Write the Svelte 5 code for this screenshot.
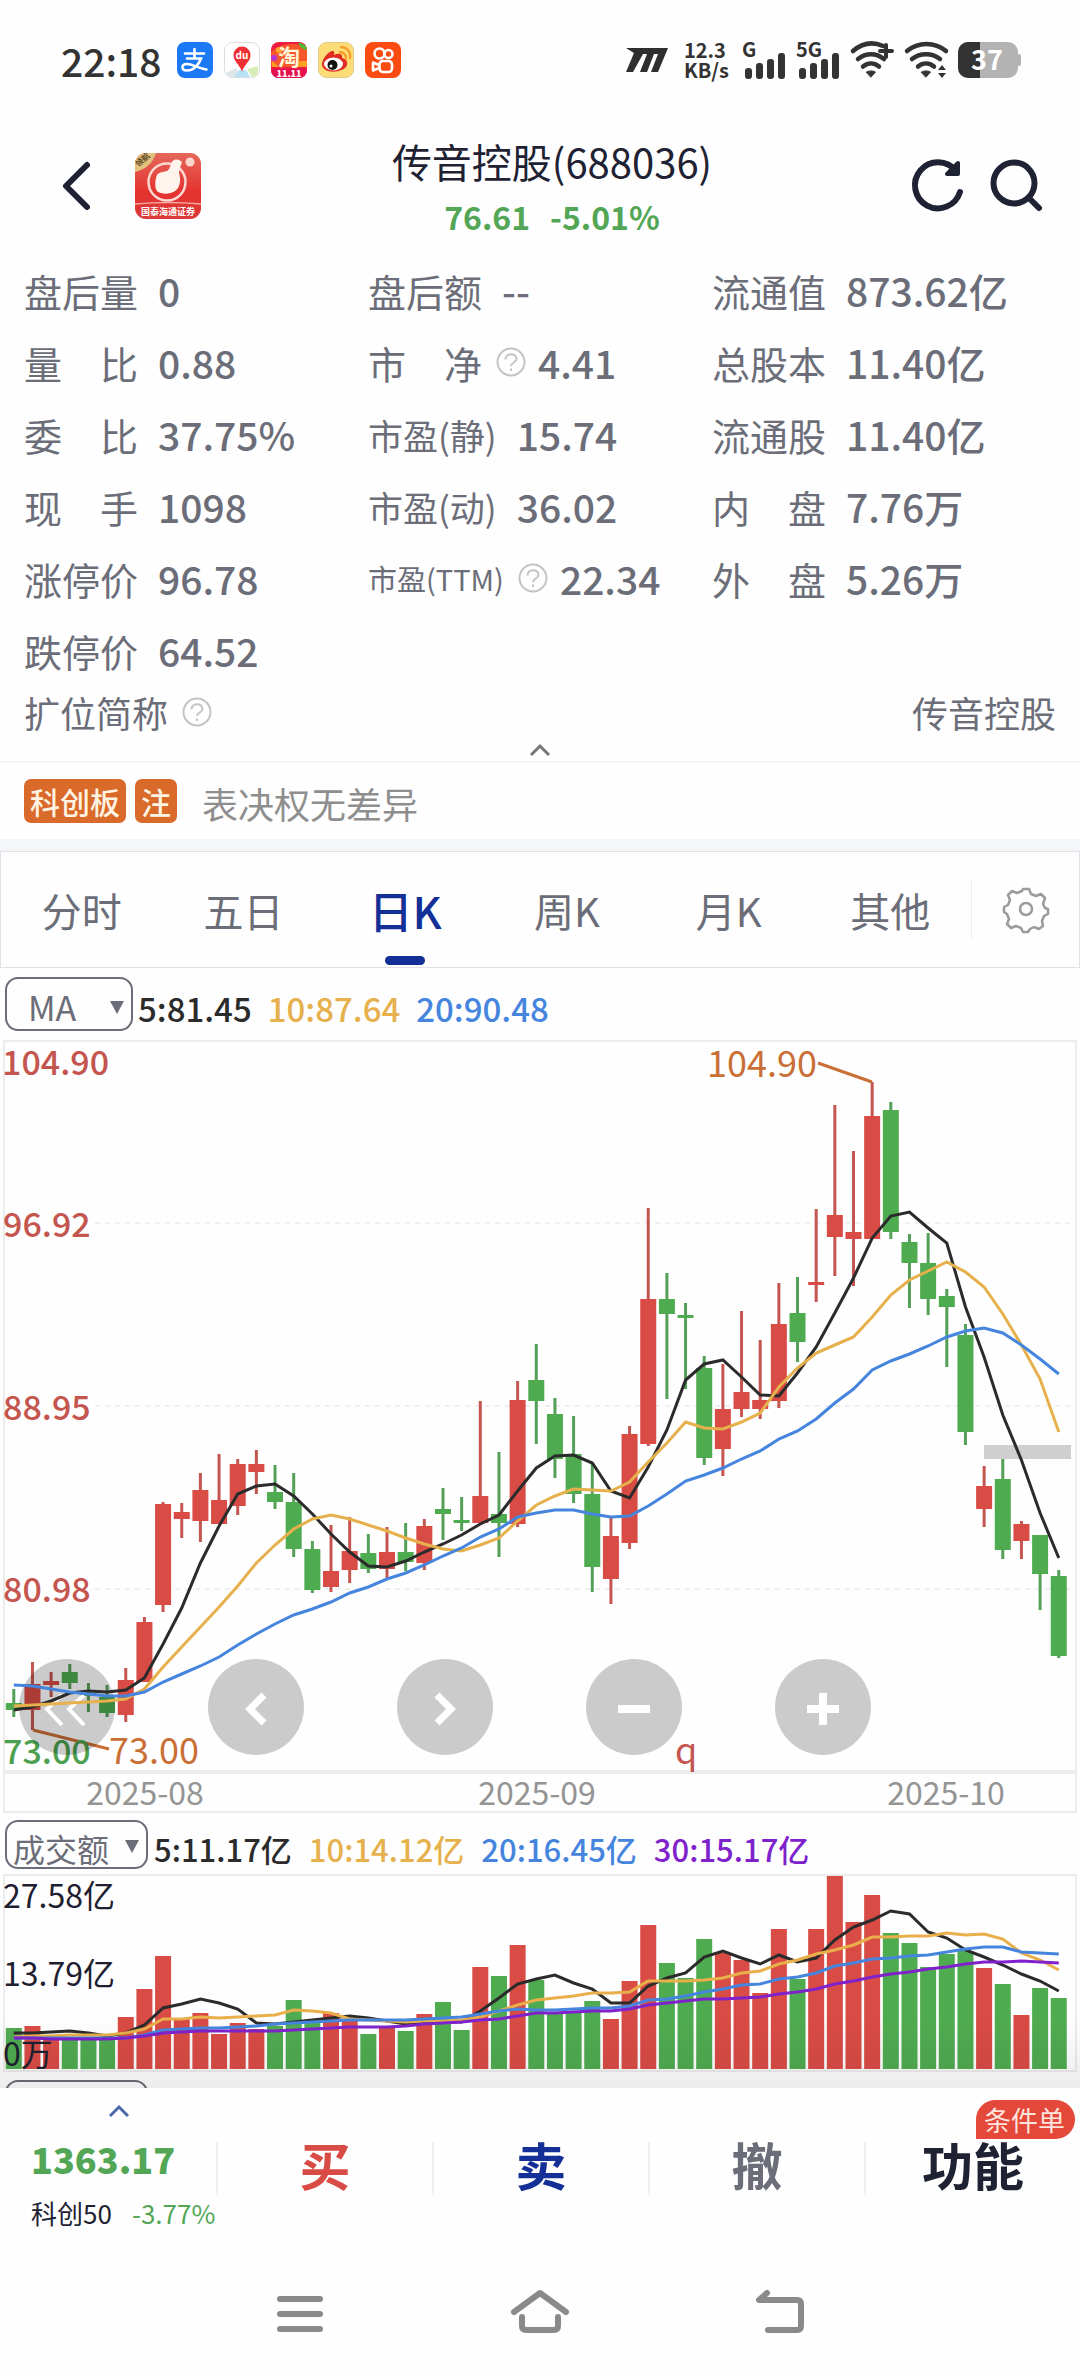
<script lang="ts">
  type Candle = [string, number, number, number, number];

  const statColumns = [
    [
      { label: '盘后量', value: '0' },
      { label: '量　比', value: '0.88' },
      { label: '委　比', value: '37.75%' },
      { label: '现　手', value: '1098' },
      { label: '涨停价', value: '96.78' },
      { label: '跌停价', value: '64.52' },
    ],
    [
      { label: '盘后额', value: '--' },
      { label: '市　净', value: '4.41', help: true },
      { label: '市盈(静)', value: '15.74', size: 'medium' },
      { label: '市盈(动)', value: '36.02', size: 'medium' },
      { label: '市盈(TTM)', value: '22.34', size: 'small', help: true },
    ],
    [
      { label: '流通值', value: '873.62亿' },
      { label: '总股本', value: '11.40亿' },
      { label: '流通股', value: '11.40亿' },
      { label: '内　盘', value: '7.76万' },
      { label: '外　盘', value: '5.26万' },
    ],
  ];

  const tabs = ['分时', '五日', '日K', '周K', '月K', '其他'];
  let activeTab = $state('日K');

  let mainIndex = $state('MA');
  let subIndex = $state('成交额');
  let thirdIndex = $state('MACD');

  const RED = '#d94b45';
  const GREEN = '#4fab50';

  // direction, high, body top, body bottom, low (chart units)
  const candles: Candle[] = [
    ['g', 649, 663, 670, 677], ['r', 622, 644, 670, 690], ['r', 632, 641, 645, 657], ['g', 624, 632, 643, 649],
    ['g', 643, 653, 656, 672], ['g', 645, 657, 673, 677], ['r', 628, 640, 675, 682], ['r', 577, 582, 642, 642],
    ['r', 462, 464, 565, 572], ['r', 463, 472, 479, 498], ['r', 433, 450, 481, 502], ['r', 414, 460, 484, 484],
    ['r', 419, 424, 466, 475], ['r', 410, 424, 432, 454], ['g', 425, 452, 462, 469], ['g', 433, 462, 509, 517],
    ['g', 501, 509, 550, 553], ['r', 485, 531, 547, 552], ['r', 477, 511, 530, 543], ['g', 494, 513, 529, 533],
    ['r', 487, 512, 529, 538], ['g', 483, 512, 522, 531], ['r', 479, 486, 523, 530], ['g', 448, 469, 474, 500],
    ['g', 457, 480, 483, 491], ['r', 361, 456, 483, 483], ['g', 412, 474, 483, 517], ['r', 341, 360, 484, 487],
    ['g', 304, 340, 361, 404], ['g', 358, 374, 419, 438], ['g', 376, 414, 454, 463], ['g', 423, 454, 527, 552],
    ['r', 478, 496, 539, 564], ['r', 386, 394, 503, 509], ['r', 168, 259, 404, 406], ['g', 233, 259, 274, 359],
    ['g', 263, 275, 278, 349], ['g', 316, 328, 418, 425], ['r', 324, 369, 409, 436], ['r', 271, 352, 369, 377],
    ['r', 300, 360, 369, 379], ['r', 243, 284, 361, 368], ['g', 237, 273, 302, 322], ['r', 169, 242, 245, 262],
    ['r', 65, 175, 197, 236], ['r', 111, 192, 199, 246], ['r', 42, 76, 199, 199], ['g', 62, 70, 192, 199],
    ['g', 194, 202, 223, 268], ['g', 193, 223, 259, 275], ['g', 249, 256, 267, 327], ['g', 284, 295, 392, 405],
    ['r', 426, 446, 469, 487], ['g', 419, 439, 510, 519], ['r', 481, 484, 501, 519], ['g', 495, 495, 534, 570],
    ['g', 530, 536, 616, 618],
  ];

  const priceLines = [
    { color: '#2b2b2b', data: [670,667,661,653,651,652,650,638,604,568,523,486,454,446,444,456,474,494,512,526,527,521,512,504,495,484,475,451,428,416,415,423,451,458,427,390,340,324,320,337,355,356,333,307,273,238,198,176,172,188,203,267,317,375,420,473,518] },
    { color: '#e6b04c', data: [666,665,664,663,662,661,659,649,627,607,587,567,546,523,505,489,479,475,479,485,491,498,504,509,511,505,498,481,465,456,449,450,451,442,422,403,382,388,389,382,373,347,328,313,305,297,277,255,240,231,222,232,247,274,305,339,392] },
    { color: '#4585de', data: [645,646,649,652,654,656,656,652,642,634,626,617,605,594,584,575,569,562,553,547,539,533,525,516,508,497,489,477,473,470,470,474,477,476,466,454,441,435,428,419,411,399,391,379,363,349,330,321,314,306,297,291,288,293,305,319,334] },
  ];

  const volumes = [154,152,165,166,166,166,143,115,82,145,139,160,149,155,152,126,147,139,147,160,152,157,140,128,156,93,102,71,106,138,138,127,145,107,51,89,104,65,79,86,119,55,105,55,2,48,21,59,69,93,80,77,94,110,141,114,124];

  const volumeLines = [
    { color: '#2b2b2b', data: [159,159,158,157,159,162,159,151,134,130,125,129,135,149,150,148,146,144,142,144,147,150,148,148,148,137,124,110,105,101,109,115,129,129,112,104,99,83,77,84,90,81,88,84,66,53,46,37,40,58,64,76,83,91,100,107,117] },
    { color: '#e9af4b', data: [163,162,162,161,161,161,159,155,145,145,143,144,143,142,141,136,137,139,145,146,147,148,147,147,146,143,137,131,126,124,122,119,119,118,107,107,107,106,104,99,97,90,86,80,76,71,63,63,62,62,59,61,60,65,79,86,96] },
    { color: '#4585de', data: [164,164,164,164,164,164,164,161,156,155,154,154,153,152,150,149,148,147,146,146,146,146,145,144,143,140,137,135,136,136,135,134,134,132,126,125,122,118,115,111,110,105,103,99,92,89,85,84,82,81,78,75,73,73,78,79,80] },
    { color: '#7f22cc', data: [164,164,165,165,165,165,164,162,159,158,157,157,157,157,157,156,155,154,153,153,153,152,150,149,148,146,145,142,139,139,138,137,137,135,131,129,127,125,125,124,123,120,118,115,110,107,103,100,98,95,93,90,88,88,87,88,89] },
  ];

  const xAt = (i: number) => 13.8 + i * 18.66;
  const colorOf = (dir: string) => (dir === 'r' ? RED : GREEN);

  function toPoints(data: number[]) {
    return data.map((y, i) => `${xAt(i).toFixed(1)},${y}`).join(' ');
  }

  const controls = [
    { name: '最左', left: 67 },
    { name: '左移', left: 256 },
    { name: '右移', left: 445 },
    { name: '缩小', left: 634 },
    { name: '放大', left: 823 },
  ];
</script>

{#snippet help()}
  <button class="help" aria-label="说明">
    <svg viewBox="0 0 30 30" width="30" height="30" fill="none" stroke="#c4c4c8" stroke-width="2">
      <circle cx="15" cy="15" r="13.5" />
      <path d="M9.500 12.500c0-7 11-7 11-.5 0 3.500-5.500 3.500-5.500 7" />
      <path d="M15 21.500v2.500" />
    </svg>
  </button>
{/snippet}

{#snippet signal(label: string)}
  <svg class="signal" viewBox="0 0 44 38" width="44" height="38" fill="#333">
    <text x="0" y="16" font-size="20" font-weight="700">{label}</text>
    <rect x="3" y="27" width="7" height="11" rx="3" />
    <rect x="14" y="22" width="7" height="16" rx="3" />
    <rect x="25" y="18" width="7" height="20" rx="3" />
    <rect x="36" y="12" width="7" height="26" rx="3" />
  </svg>
{/snippet}

<div class="page">
  <div class="status">
    <span class="time">22:18</span>
    <div class="apps">
      <svg viewBox="0 0 36 36" width="36" height="36">
        <rect width="36" height="36" rx="8" fill="#1b79f5" />
        <g fill="none" stroke="#fff" stroke-width="2.600" stroke-linecap="round">
          <path d="M8 11.500h19M17.500 7v9M10 16.500h14C22 22 17 28.500 10 28.500c-6 0-6-6.500-.5-6.500 6 0 11 4 20 5.500" />
        </g>
      </svg>
      <svg viewBox="0 0 36 36" width="36" height="36">
        <rect x=".5" y=".5" width="35" height="35" rx="8" fill="#fff" stroke="#ddd" />
        <path d="M2 31l10-5 5 9H9c-4 0-6-1-7-4z" fill="#dfe6ea" />
        <path d="M10 35l5-7h7l4 7z" fill="#b8e2f5" />
        <path d="M23 27l11-3v5c0 3-2 6-6 6z" fill="#d6efb8" />
        <path d="M18 30C16.500 23 9.500 20 9.500 13a8.500 8.500 0 0 1 17 0c0 7-7 10-8.500 17z" fill="#ee2f33" />
        <text x="18" y="17" font-size="10" font-weight="700" fill="#fff" text-anchor="middle">du</text>
      </svg>
      <svg viewBox="0 0 36 36" width="36" height="36">
        <rect width="36" height="36" rx="8" fill="#ee1c3e" />
        <path d="M0 10c8-8 27-12 36-2v17H0z" fill="#f4572c" />
        <path d="M27 1c5 0 8 2 9 7-3 0-6-2-9-7z" fill="#4bbd32" />
        <circle cx="8" cy="8" r="3" fill="#ffa62b" />
        <circle cx="3" cy="16" r="3" fill="#b535d8" />
        <path d="M1 19l7 6H1zM28 19h8v6h-9z" fill="#ff9e22" />
        <path d="M0 27h36v1a8 8 0 0 1-8 8H8a8 8 0 0 1-8-8z" fill="#e6114f" />
        <text x="18" y="23" font-size="22" font-weight="700" fill="#fff5d8" text-anchor="middle">淘</text>
        <text x="18" y="35" font-size="9" font-weight="900" fill="#fff" text-anchor="middle">11.11</text>
      </svg>
      <svg viewBox="0 0 36 36" width="36" height="36">
        <rect x=".5" y=".5" width="35" height="35" rx="8" fill="#fcdc76" stroke="#e3c987" />
        <path d="M4 22c0-6 8-14 11-13 2 .6 1 3 1 4 4-2 9-2 8 3 4 1 6 4 5 7-2 8-25 10-25-1z" fill="#e02a22" />
        <ellipse cx="15.500" cy="22" rx="9.500" ry="6.500" fill="#fff" />
        <circle cx="14.500" cy="23" r="5" fill="#111" />
        <circle cx="13" cy="24" r="1.500" fill="#fff" />
        <path d="M22 10a6 6 0 0 1 6 7M23 5c6 0 10 5 9 11" fill="none" stroke="#f6a02c" stroke-width="2.400" stroke-linecap="round" />
      </svg>
      <svg viewBox="0 0 36 36" width="36" height="36">
        <rect width="36" height="36" rx="8" fill="#fa4b10" />
        <g fill="none" stroke="#fff" stroke-width="2.600">
          <circle cx="14.500" cy="11.500" r="5" />
          <circle cx="23.500" cy="12" r="4" />
          <rect x="14.500" y="19" width="12.500" height="11" rx="3.500" />
          <path d="M14 23l-6-2.500v8L14 26" stroke-linejoin="round" />
        </g>
      </svg>
    </div>
    <div class="system">
      <svg viewBox="0 0 42 24" width="42" height="24" fill="#2f2f2f">
        <path d="M0 0h42l-10 24h-7l7-18h-4l-7 18h-7l7-18h-4L7 24H0L8 5z" />
      </svg>
      <div class="speed"><span>12.3</span><span>KB/s</span></div>
      {@render signal('G')}
      {@render signal('5G')}
      <svg viewBox="0 0 44 38" width="44" height="38" fill="none" stroke="#333" stroke-width="4.500" stroke-linecap="round">
        <path d="M3 10c10-8.500 20-9.500 30-5M8 18c8-6.500 18-6.500 26 0M13 25.500c5-4 11-4 16 0" />
        <path d="M16.500 31c3-1.500 6-1.500 9 0L21 36z" fill="#333" stroke-width="1" />
        <path d="M30 10h12M36 4v12" stroke-width="4" />
      </svg>
      <svg viewBox="0 0 44 38" width="44" height="38" fill="none" stroke="#333" stroke-width="4.500" stroke-linecap="round">
        <path d="M3 10c11-9.500 28-9.500 39 0M8 18c8-6.500 20-6.500 28 0M14 25.500c5-4 11-4 16 0" />
        <path d="M17.500 31c3-1.500 6-1.500 9 0L22 36z" fill="#333" stroke-width="1" />
        <path d="M34 29l4-5 4 5zM34 32l4 5 4-5z" fill="#333" stroke="none" />
      </svg>
      <svg viewBox="0 0 64 36" width="64" height="36">
        <rect width="60" height="36" rx="10" fill="#b3b3b3" />
        <rect x="59" y="12" width="4" height="12" rx="2" fill="#b3b3b3" />
        <path d="M10 0h12v36H10A10 10 0 0 1 0 26V10A10 10 0 0 1 10 0z" fill="#333" />
        <text x="29" y="28" font-size="27" font-weight="700" fill="#fff" text-anchor="middle">37</text>
      </svg>
    </div>
  </div>

  <header>
    <div class="side">
      <button aria-label="返回">
        <svg viewBox="0 0 32 52" width="32" height="52" fill="none" stroke="#1e2233" stroke-width="6" stroke-linecap="round" stroke-linejoin="round">
          <path d="M27 5L6 26l21 21" />
        </svg>
      </button>
      <svg class="logo" viewBox="0 0 66 66" width="66" height="66">
        <defs>
          <linearGradient id="logo-bg" x1="0" y1="0" x2="0" y2="1">
            <stop offset="0" stop-color="#e4685a" />
            <stop offset=".6" stop-color="#e5322f" />
            <stop offset="1" stop-color="#d93a3a" />
          </linearGradient>
        </defs>
        <rect width="66" height="66" rx="11" fill="url(#logo-bg)" />
        <path d="M11 0h10C18 10 10 17 0 19v-8A11 11 0 0 1 11 0z" fill="#e3c07c" />
        <text x="-7" y="13" font-size="8" font-weight="700" fill="#5d4a28" transform="rotate(-42)">领航</text>
        <circle cx="32" cy="29" r="18.500" fill="none" stroke="#fbd9d2" stroke-width="2.500" />
        <path d="M22 22c2-3 6-3 10-4 4-2 3-9 7-11 3-1 6 0 8 2-1 4-3 7-3 11 2 6 1 12-1 15-4 6-13 7-20 4-4-3-3-12-1-17z" fill="#fff3ee" />
        <circle cx="55" cy="9" r="4.500" fill="#f9d5cd" />
        <path d="M0 51c22-2 44-2 66 0" stroke="#f4aaa0" stroke-width="1.500" fill="none" />
        <text x="33" y="62" font-size="9" font-weight="700" fill="#fff" text-anchor="middle">国泰海通证券</text>
      </svg>
    </div>
    <div class="title">
      <h1>传音控股(688036)</h1>
      <p><span>76.61</span><span>-5.01%</span></p>
    </div>
    <div class="side right">
      <button aria-label="刷新">
        <svg viewBox="0 0 56 56" width="56" height="56" fill="none" stroke="#1e2233" stroke-width="6" stroke-linecap="round">
          <path d="M50 34A23 23 0 1 1 46 13" />
          <path d="M48 5v11H37z" fill="#1e2233" stroke-width="4" stroke-linejoin="round" />
        </svg>
      </button>
      <button aria-label="搜索">
        <svg viewBox="0 0 56 56" width="56" height="56" fill="none" stroke="#1e2233" stroke-width="6" stroke-linecap="round">
          <circle cx="26" cy="25" r="20.500" />
          <path d="M41 40l10 10" />
        </svg>
      </button>
    </div>
  </header>

  <section class="stats">
    <div class="columns">
      {#each statColumns as column}
        <div class="column">
          {#each column as stat}
            <div class="stat">
              <span class="label {stat.size ?? ''}">{stat.label}</span>
              {#if stat.help}
                {@render help()}
              {/if}
              <span class="value">{stat.value}</span>
            </div>
          {/each}
        </div>
      {/each}
    </div>
    <div class="fullname">
      <span>扩位简称</span>
      {@render help()}
      <span class="name">传音控股</span>
    </div>
    <button class="collapse" aria-label="收起">
      <svg viewBox="0 0 22 12" width="22" height="12" fill="none" stroke="#777" stroke-width="3"><path d="M2 11l9-9 9 9" /></svg>
    </button>
  </section>

  <div class="notice">
    <span class="tag">科创板</span>
    <span class="tag">注</span>
    <span class="note">表决权无差异</span>
  </div>

  <nav class="tabs">
    {#each tabs as tab}
      <button class:active={tab === activeTab} onclick={() => (activeTab = tab)}>{tab}</button>
    {/each}
    <button class="gear" aria-label="设置">
      <svg viewBox="0 0 46 46" width="46" height="46" fill="none" stroke="#9b9b9f" stroke-width="2.500" stroke-linejoin="round">
        <path d="M20 3h6l2 5 5 2 5-2 4 4-2 6 2 4 3 1v5l-4 2-2 5 1 5-4 3-5-2-4 2-2 3h-5l-2-4-5-2-5 2-4-4 2-5-2-5-3-2v-5l4-2 2-5-2-5 4-4 5 2 5-2z" />
        <circle cx="23" cy="23" r="6" />
      </svg>
    </button>
  </nav>

  <div class="scroll">
    <div class="legend main">
      <div class="picker">
        <select bind:value={mainIndex} aria-label="主图指标">
          <option>MA</option>
          <option>BOLL</option>
        </select>
      </div>
      <span class="c5">5:81.45</span>
      <span class="c10">10:87.64</span>
      <span class="c20">20:90.48</span>
    </div>

    <div class="chart">
      <svg viewBox="0 0 1080 774">
        <rect x="4" y="1" width="1072" height="730" fill="none" stroke="#ececec" stroke-width="2" />
        <rect x="4" y="733" width="1072" height="39" fill="none" stroke="#ececec" stroke-width="2" />
        {#each [183, 366, 549] as y}
          <line x1="95" x2="1072" y1={y} y2={y} stroke="#efefef" stroke-width="2" stroke-dasharray="5 5" />
        {/each}
        {#each candles as [dir, high, top, bottom, low], i}
          <rect x={xAt(i) - 1.5} y={high} width="3" height={low - high} fill={dir === 'r' ? '#c4564f' : '#55a058'} />
          <rect x={xAt(i) - 8} y={top} width="16" height={bottom - top} fill={colorOf(dir)} />
        {/each}
        <rect x="984" y="405" width="87" height="14" fill="#cfcfcf" />
        <g fill="none" stroke="#c96f35" stroke-width="3">
          <path d="M818 23l54 19" />
          <path d="M33 690l76 19" />
        </g>
        <g font-size="34" font-weight="500" fill="#c4554f">
          <text x="2" y="35">104.90</text>
          <text x="3" y="197">96.92</text>
          <text x="3" y="380">88.95</text>
          <text x="3" y="562">80.98</text>
          <text x="3" y="724" fill="#4ca04f">73.00</text>
        </g>
        <g font-size="36" fill="#c96f35">
          <text x="707" y="37">104.90</text>
          <text x="109" y="724">73.00</text>
          <text x="675" y="724" fill="#c4554f">q</text>
        </g>
        <g font-size="32" fill="#949494" text-anchor="middle">
          <text x="145" y="765">2025-08</text>
          <text x="537" y="765">2025-09</text>
          <text x="946" y="765">2025-10</text>
        </g>
      </svg>
      {#each controls as control, i}
        <button class="control" aria-label={control.name} style="left: {(control.left / 1080) * 100}%">
          <svg viewBox="0 0 96 96" width="96" height="96" fill="none" stroke="#fff" stroke-width="8">
            {#if i === 0}
              <path d="M43 36L28 50l15 16M65 36L50 50l15 16" stroke-width="4" />
            {:else if i === 1}
              <path d="M56 36L42 50l14 14" stroke-width="7" />
            {:else if i === 2}
              <path d="M40 36l14 14-14 14" stroke-width="7" />
            {:else if i === 3}
              <path d="M32 50h32" />
            {:else}
              <path d="M32 50h32M48 34v32" />
            {/if}
          </svg>
        </button>
      {/each}
      <svg class="lines" viewBox="0 0 1080 774" fill="none" stroke-width="3">
        {#each priceLines as line}
          <polyline points={toPoints(line.data)} stroke={line.color} />
        {/each}
      </svg>
    </div>

    <div class="legend sub">
      <div class="picker">
        <select bind:value={subIndex} aria-label="副图指标">
          <option>成交额</option>
          <option>成交量</option>
        </select>
      </div>
      <span class="c5">5:11.17亿</span>
      <span class="c10">10:14.12亿</span>
      <span class="c20">20:16.45亿</span>
      <span class="c30">30:15.17亿</span>
    </div>

    <svg class="volume" viewBox="0 0 1080 198">
      <rect x="4" y="1" width="1072" height="196" fill="none" stroke="#ececec" stroke-width="2" />
      {#each volumes as top, i}
        <rect x={xAt(i) - 8} y={top} width="16" height={195 - top} fill={colorOf(candles[i][0])} />
      {/each}
      <g fill="none" stroke-width="3">
        {#each volumeLines as line}
          <polyline points={toPoints(line.data)} stroke={line.color} />
        {/each}
      </g>
      <g font-size="32" fill="#1e2030">
        <text x="3" y="34">27.58亿</text>
        <text x="3" y="112">13.79亿</text>
        <text x="3" y="192">0万</text>
      </g>
    </svg>

    <div class="next">
      <div class="picker">
        <select bind:value={thirdIndex} aria-label="第三指标">
          <option>MACD</option>
        </select>
      </div>
    </div>
  </div>

  <div class="trade">
    <button class="index">
      <svg viewBox="0 0 22 14" width="22" height="14" fill="none" stroke="#4b69a8" stroke-width="3"><path d="M2 12l9-9 9 9" /></svg>
      <strong>1363.17</strong>
      <span class="change"><span>科创50</span><span class="down">-3.77%</span></span>
    </button>
    <button class="buy">买</button>
    <button class="sell">卖</button>
    <button class="cancel">撤</button>
    <button class="more">功能<span class="badge">条件单</span></button>
  </div>

  <div class="navbar">
    <button aria-label="最近任务">
      <svg viewBox="0 0 60 48" width="60" height="48" fill="none" stroke="#8a8a8a" stroke-width="6" stroke-linecap="round">
        <path d="M10 9h40M10 24h40M10 39h40" />
      </svg>
    </button>
    <button aria-label="主屏幕">
      <svg viewBox="0 0 60 48" width="60" height="48" fill="none" stroke="#8a8a8a" stroke-width="6" stroke-linecap="round" stroke-linejoin="round">
        <path d="M4 22L30 3l26 19" />
        <path d="M12 27v9q0 4 4 4h28q4 0 4-4v-9" />
      </svg>
    </button>
    <button aria-label="返回上一级">
      <svg viewBox="0 0 60 48" width="60" height="48" fill="none" stroke="#8a8a8a" stroke-width="6" stroke-linecap="round" stroke-linejoin="round">
        <path d="M17 3L9 10h38q4 0 4 4v22q0 4-4 4H18" />
      </svg>
    </button>
  </div>
</div>

<style>
  :global(body) {
    margin: 0;
    background: #fefefe;
  }

  .page {
    display: flex;
    flex-direction: column;
    min-height: 100vh;
    font-family: "Noto Sans CJK SC", "Noto Sans", sans-serif;
    color: #6b6d78;
  }

  svg {
    display: block;
    flex-shrink: 0;
    overflow: visible;
  }

  button {
    padding: 0;
    border: 0;
    background: none;
    font: inherit;
    color: inherit;
  }

  .status {
    display: flex;
    align-items: center;
    height: 120px;
    padding: 0 58px 0 61px;
  }

  .time {
    width: 116px;
    font-size: 39px;
    font-weight: 500;
    line-height: 54px;
    color: #333;
  }

  .apps {
    display: flex;
    gap: 11px;
  }

  .system {
    display: flex;
    align-items: center;
    gap: 10px;
    margin-left: auto;
  }

  .speed {
    display: flex;
    flex-direction: column;
    width: 48px;
    margin-left: 6px;
    font-size: 20px;
    font-weight: 700;
    line-height: 20px;
    color: #333;
  }

  header {
    display: flex;
    align-items: center;
    justify-content: space-between;
    height: 132px;
    padding: 0 36px 0 60px;
  }

  .side {
    display: flex;
    align-items: center;
    gap: 43px;
    width: 184px;
  }

  .side.right {
    justify-content: flex-end;
    gap: 22px;
  }

  .title {
    padding-top: 3px;
    text-align: center;
  }

  h1 {
    margin: 0;
    font-size: 40px;
    font-weight: 400;
    line-height: 56px;
    color: #1e2233;
  }

  .title p {
    display: flex;
    justify-content: center;
    gap: 20px;
    margin: 0;
    font-size: 32px;
    font-weight: 700;
    line-height: 54px;
    color: #52a656;
  }

  .stats {
    padding: 2px 24px 0;
    border-bottom: 2px solid #f3f3f5;
  }

  .columns {
    display: grid;
    grid-template-columns: repeat(3, 1fr);
  }

  .stat {
    display: flex;
    align-items: center;
    height: 72px;
    white-space: nowrap;
  }

  .label {
    font-size: 38px;
  }

  .label.medium {
    font-size: 35px;
  }

  .label.small {
    font-size: 29px;
  }

  .value {
    margin-left: 20px;
    font-size: 39px;
    font-weight: 500;
  }

  .help {
    margin-left: 14px;
  }

  .help + .value {
    margin-left: 12px;
  }

  .fullname {
    display: flex;
    align-items: center;
    height: 52px;
    font-size: 36px;
  }

  .fullname .name {
    margin-left: auto;
  }

  .collapse {
    display: flex;
    justify-content: center;
    width: 100%;
    height: 23px;
    padding-top: 6px;
  }

  .notice {
    display: flex;
    align-items: center;
    gap: 9px;
    height: 76px;
    padding: 0 24px;
    border-bottom: 12px solid #f4f6fa;
  }

  .tag {
    padding: 0 6px;
    border-radius: 7px;
    background: #d96a29;
    font-size: 30px;
    font-weight: 500;
    line-height: 44px;
    color: #fff3e2;
  }

  .note {
    margin-left: 16px;
    padding-top: 3px;
    font-size: 36px;
    color: #8e8e8e;
  }

  .tabs {
    display: grid;
    grid-template-columns: repeat(6, 3fr) 2fr;
    height: 115px;
    border: 1px solid #e2e2e5;
  }

  .tabs button {
    position: relative;
    font-size: 40px;
  }

  .tabs .active {
    font-size: 44px;
    font-weight: 500;
    color: #142f96;
  }

  .tabs .active::after {
    content: "";
    position: absolute;
    bottom: 2px;
    left: 50%;
    width: 40px;
    height: 9px;
    margin-left: -20px;
    border-radius: 5px;
    background: #142f96;
  }

  .tabs .gear {
    display: flex;
    align-items: center;
    justify-content: center;
    height: 60px;
    margin-top: 27px;
    border-left: 1px solid #ededf0;
  }

  .scroll {
    position: relative;
  }

  /* fade towards the trade bar */
  .scroll::after {
    content: "";
    position: absolute;
    right: 0;
    bottom: 0;
    left: 0;
    height: 72px;
    background: linear-gradient(rgba(0, 0, 0, 0), rgba(0, 0, 0, 0.07));
    pointer-events: none;
  }

  .legend {
    display: flex;
    align-items: center;
    gap: 17px;
    padding: 0 5px;
    font-size: 31px;
    font-weight: 500;
    white-space: nowrap;
  }

  .legend.main {
    gap: 16px;
    height: 72px;
    font-size: 33px;
  }

  .legend.sub {
    height: 60px;
  }

  .legend span {
    padding-top: 8px;
  }

  .legend .c5 {
    margin-left: -11px;
    color: #2b2b2b;
  }

  .c10 {
    color: #e6b04c;
  }

  .c20 {
    color: #4585de;
  }

  .c30 {
    color: #7f22cc;
  }

  .picker {
    position: relative;
    width: 143px;
  }

  .main .picker {
    width: 128px;
  }

  .picker::after {
    content: "";
    position: absolute;
    top: 20px;
    right: 9px;
    border: 7px solid transparent;
    border-top: 13px solid #6b6d78;
    border-bottom: 0;
    pointer-events: none;
  }

  .main .picker::after {
    top: 24px;
  }

  .picker select {
    display: block;
    width: 100%;
    height: 49px;
    padding: 3px 0 0 6px;
    border: 2px solid #6b6d78;
    border-radius: 13px;
    appearance: none;
    background: #fefefe;
    font: 400 32px "Noto Sans CJK SC", sans-serif;
    color: #6b6d78;
  }

  .main .picker select {
    height: 54px;
    padding-left: 21px;
    font-size: 34px;
  }

  .chart {
    position: relative;
  }

  .chart > svg,
  .volume {
    width: 100%;
    height: auto;
  }

  .chart > .lines {
    position: absolute;
    top: 0;
    left: 0;
    pointer-events: none;
  }

  .control {
    position: absolute;
    bottom: 59px;
    width: 96px;
    height: 96px;
    margin-left: -48px;
    border-radius: 50%;
    background: rgba(0, 0, 0, 0.2);
  }

  .next {
    height: 8px;
    padding: 8px 5px 0;
    overflow: hidden;
  }

  .trade {
    display: grid;
    grid-template-columns: repeat(5, 1fr);
    height: 162px;
    background: #fefefe;
  }

  .trade button {
    position: relative;
    height: 53px;
    margin-top: 54px;
    padding-bottom: 8px;
    border-left: 2px solid #f0f0f2;
    font-size: 51px;
    font-weight: 700;
    line-height: 45px;
  }

  .trade .index {
    display: flex;
    flex-direction: column;
    align-items: flex-start;
    height: 162px;
    margin: 0;
    padding: 16px 0 0 31px;
    border: 0;
  }

  .index svg {
    margin-left: 77px;
  }

  .index strong {
    margin-top: 14px;
    font-size: 36px;
    line-height: 52px;
    color: #52a656;
  }

  .change {
    display: flex;
    gap: 20px;
    margin-top: 10px;
    font-size: 26px;
    font-weight: 400;
    line-height: 38px;
    color: #1e2233;
    white-space: nowrap;
  }

  .change .down {
    color: #52a656;
  }

  .trade .buy {
    color: #d94b45;
  }

  .trade .sell {
    color: #142f96;
  }

  .trade .more {
    color: #1e2233;
  }

  .badge {
    position: absolute;
    top: -42px;
    right: 5px;
    padding: 0 10px 0 8px;
    border-radius: 20px 20px 20px 0;
    background: #e3483a;
    font-size: 27px;
    font-weight: 400;
    line-height: 39px;
    color: #ffe3dc;
  }

  .navbar {
    display: flex;
    justify-content: center;
    gap: 180px;
    padding-top: 40px;
  }
</style>
